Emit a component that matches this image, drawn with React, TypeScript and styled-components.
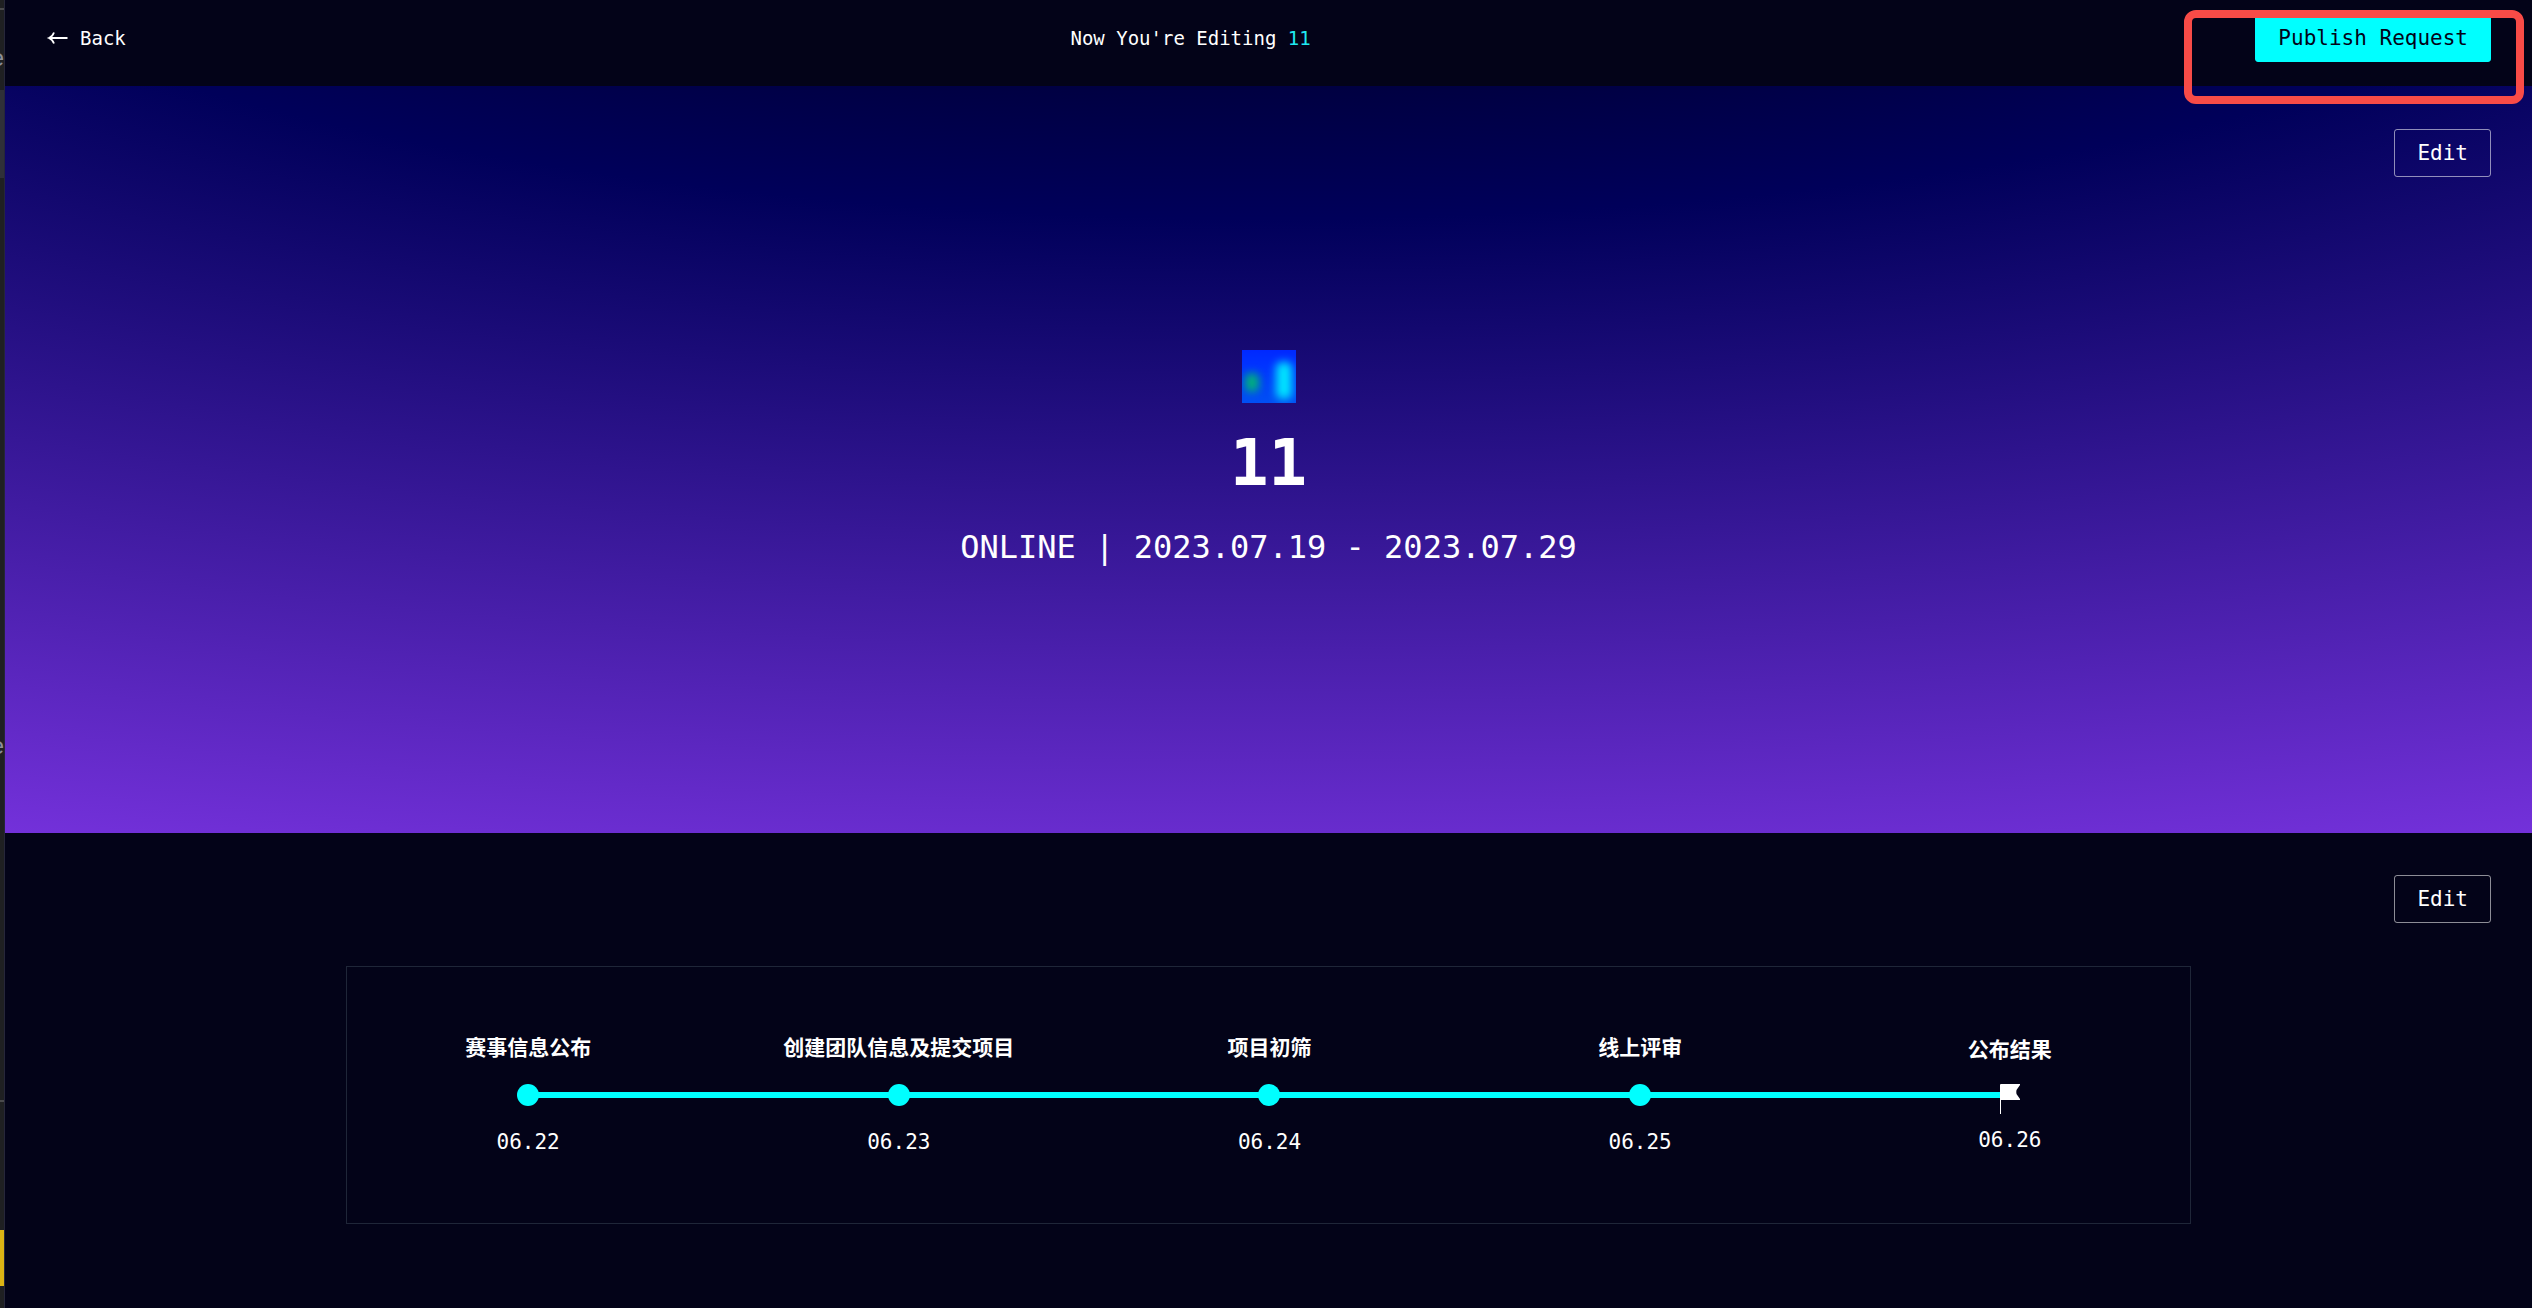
import React from "react";
import styled, { createGlobalStyle } from "styled-components";

const mono = `"DejaVu Sans Mono", "Noto Sans CJK SC", monospace`;
const cyan = "#00ffff";
const ink = "#030318";

const GlobalStyle = createGlobalStyle`
  *, *::before, *::after { box-sizing: border-box; }
  body { margin: 0; background: ${ink}; }
  h1, p, ol { margin: 0; padding: 0; }
  ol { list-style: none; }
`;

const Shell = styled.div`
  position: relative;
  display: flex;
  min-height: 100vh;
  color: #fff;
  font-family: ${mono};
  font-size: 21px;
  line-height: 28px;
`;

const Rail = styled.aside`
  flex: none;
  display: flex;
  flex-direction: column;
  width: 5px;
  overflow: hidden;
  background: #1f2022;
  border-right: 1px solid #26263a;
`;

const RailItem = styled.div<{ $height: number; $tone?: string; $ruled?: boolean }>`
  flex: none;
  display: flex;
  align-items: center;
  justify-content: flex-end;
  height: ${(p) => p.$height}px;
  background: ${(p) => p.$tone ?? "transparent"};
  border-bottom: ${(p) => (p.$ruled ? "2px solid #4a4a4c" : "none")};
  color: #8c8f98;
  font-family: "Liberation Sans", sans-serif;
  font-size: 24px;
`;

const Page = styled.main`
  flex: 1;
  min-width: 0;
`;

const TopBar = styled.header`
  display: flex;
  align-items: center;
  justify-content: space-between;
  padding: 14px 41px 24px 40px;
`;

const BackLink = styled.a`
  display: flex;
  align-items: center;
  gap: 11px;
  color: #fff;
  font-size: 19px;
  text-decoration: none;
`;

const Editing = styled.p`
  font-size: 19px;
`;

const Accent = styled.span`
  color: #1fe9f0;
`;

const Button = styled.button<{ $primary?: boolean }>`
  height: 48px;
  padding: 0 22px;
  border: 1px solid ${(p) => (p.$primary ? cyan : "rgba(255, 255, 255, 0.55)")};
  border-radius: 3px;
  background: ${(p) => (p.$primary ? cyan : "transparent")};
  color: ${(p) => (p.$primary ? ink : "#fff")};
  font: inherit;
  cursor: pointer;
`;

const EditRow = styled.div`
  display: flex;
  justify-content: flex-end;
  padding: 42px 41px 43px;
`;

const Hero = styled.section`
  min-height: 747px;
  padding-top: 1px;
  background: radial-gradient(ellipse 152% 158% at 50% -47%, #000000 0%, #00005a 41%, #7632dd 100%);
`;

const HeroBody = styled.div`
  display: flex;
  flex-direction: column;
  align-items: center;
  padding-top: 130px;
`;

const Title = styled.h1`
  margin: 20px 0;
  font-size: 64px;
  line-height: 80px;
`;

const Subtitle = styled.p`
  font-size: 32px;
  line-height: 48px;
`;

const Card = styled.div`
  width: 73%;
  margin: 0 auto;
  padding: 67px 170px;
  border: 1px solid #1f2638;
`;

const Timeline = styled.ol`
  display: flex;
  align-items: center;
`;

const Step = styled.li<{ $final?: boolean }>`
  flex: none;
  display: flex;
  flex-direction: column;
  align-items: center;
  gap: ${(p) => (p.$final ? 20 : 22)}px;
  width: ${(p) => (p.$final ? 20 : 22)}px;
  white-space: nowrap;
`;

const StepName = styled.span`
  font-weight: 700;
`;

const Dot = styled.span`
  width: 22px;
  height: 22px;
  border-radius: 50%;
  background: ${cyan};
`;

const Connector = styled.li`
  flex: 1;
  height: 6px;
  margin: 0 -1px;
  background: ${cyan};
`;

const Highlight = styled.div`
  position: absolute;
  top: 10px;
  right: 8px;
  width: 340px;
  height: 94px;
  border: 8px solid #f84b47;
  border-radius: 12px;
  pointer-events: none;
`;

const ArrowIcon = () => (
  <svg width="24" height="24" viewBox="0 0 24 24" fill="none" stroke="#fff" strokeWidth="1.8" aria-hidden="true">
    <path d="M22.5 12H4M9 6.5Q7.5 10.5 4 12Q7.5 13.5 9 17.5" />
  </svg>
);

const FlagIcon = () => (
  <svg width="20" height="22" viewBox="0 0 20 22" overflow="visible" fill="#fff" aria-hidden="true">
    <path d="M0 1Q0 0 1 0H20V1L16.5 6Q16 8 16.5 10L20 15V16H1V30H0Z" />
  </svg>
);

const Cover = () => (
  <svg width="54" height="53" viewBox="0 0 54 53" aria-hidden="true">
    <defs>
      <linearGradient id="base" x1="0" y1="0" x2="0" y2="1">
        <stop offset="0" stopColor="#0028ff" />
        <stop offset="0.3" stopColor="#0034ff" />
        <stop offset="1" stopColor="#0050f4" />
      </linearGradient>
      <filter id="soft" x="-100%" y="-100%" width="300%" height="300%" colorInterpolationFilters="sRGB">
        <feGaussianBlur stdDeviation="4" />
      </filter>
    </defs>
    <rect width="54" height="53" fill="url(#base)" />
    <rect x="34" y="12" width="16" height="37" rx="6" fill="#00e4ff" filter="url(#soft)" />
    <rect x="3" y="23" width="14" height="19" rx="6" fill="#00b478" filter="url(#soft)" />
  </svg>
);

const steps = [
  { name: "赛事信息公布", date: "06.22" },
  { name: "创建团队信息及提交项目", date: "06.23" },
  { name: "项目初筛", date: "06.24" },
  { name: "线上评审", date: "06.25" },
  { name: "公布结果", date: "06.26" },
];

export default function App() {
  return (
    <>
      <GlobalStyle />
      <Shell>
        <Rail>
          <RailItem $height={10} $ruled />
          <RailItem $height={16} />
          <RailItem $height={64}>e</RailItem>
          <RailItem $height={88} $tone="#2f3038" />
          <RailItem $height={548} />
          <RailItem $height={40}>e</RailItem>
          <RailItem $height={336} $ruled />
          <RailItem $height={128} />
          <RailItem $height={56} $tone="#dcb414" />
        </Rail>
        <Page>
          <TopBar>
            <BackLink href="#back">
              <ArrowIcon />
              Back
            </BackLink>
            <Editing>
              Now You're Editing <Accent>11</Accent>
            </Editing>
            <Button $primary>Publish Request</Button>
          </TopBar>
          <Hero>
            <EditRow>
              <Button>Edit</Button>
            </EditRow>
            <HeroBody>
              <Cover />
              <Title>11</Title>
              <Subtitle>ONLINE | 2023.07.19 - 2023.07.29</Subtitle>
            </HeroBody>
          </Hero>
          <section>
            <EditRow>
              <Button>Edit</Button>
            </EditRow>
            <Card>
              <Timeline>
                {steps.map((step, i) => {
                  const final = i === steps.length - 1;
                  return (
                    <React.Fragment key={step.date}>
                      {i > 0 && <Connector aria-hidden="true" />}
                      <Step $final={final}>
                        <StepName>{step.name}</StepName>
                        {final ? <FlagIcon /> : <Dot />}
                        <time>{step.date}</time>
                      </Step>
                    </React.Fragment>
                  );
                })}
              </Timeline>
            </Card>
          </section>
        </Page>
        <Highlight />
      </Shell>
    </>
  );
}
